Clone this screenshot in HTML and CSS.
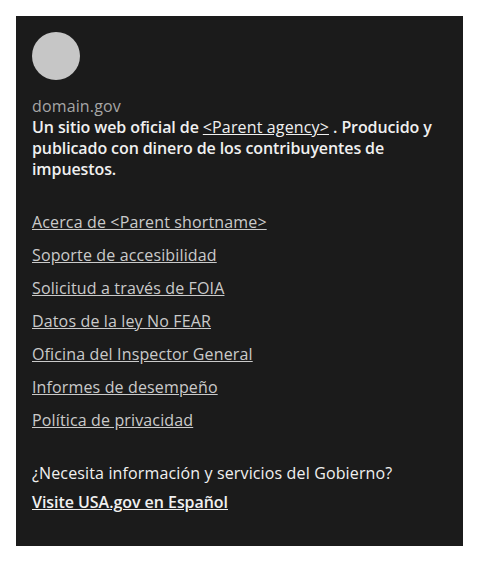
FILE: index.html
```html
<!DOCTYPE html>
<html lang="es">
<head>
<meta charset="utf-8">
<link rel="stylesheet" href="styles.css">
</head>
<body>
<footer class="identifier">
  <section class="masthead">
    <div class="logo"></div>
    <div class="identity">
      <p class="domain">domain.gov</p>
      <p class="disclaimer">Un sitio web oficial de <a href="#">&lt;Parent agency&gt;</a> . Producido y publicado con dinero de los contribuyentes de impuestos.</p>
    </div>
  </section>
  <nav class="links">
    <ul>
      <li><a href="#">Acerca de &lt;Parent shortname&gt;</a></li>
      <li><a href="#">Soporte de accesibilidad</a></li>
      <li><a href="#">Solicitud a través de FOIA</a></li>
      <li><a href="#">Datos de la ley No FEAR</a></li>
      <li><a href="#">Oficina del Inspector General</a></li>
      <li><a href="#">Informes de desempeño</a></li>
      <li><a href="#">Política de privacidad</a></li>
    </ul>
  </nav>
  <section class="usagov">
    <p class="question">¿Necesita información y servicios del Gobierno?</p>
    <a class="visit" href="#">Visite USA.gov en Español</a>
  </section>
</footer>
</body>
</html>
```
FILE: styles.css
```css
html, body {
  margin: 0;
  padding: 0;
  background: #ffffff;
}
body {
  padding: 16px;
  font-family: "Open Sans", "DejaVu Sans", sans-serif;
  font-size: 16px;
  letter-spacing: 0.14px;
}
p { margin: 0; }
.identifier {
  background: #1b1b1b;
  padding: 16px 16px 33px;
}
.logo {
  width: 48px;
  height: 48px;
  border-radius: 50%;
  background: #c6c6c6;
}
.identity {
  margin-top: 16px;
}
.domain {
  color: #a6a6a6;
  line-height: 21px;
}
.disclaimer {
  color: #f0f0f0;
  font-weight: 600;
  line-height: 21px;
  letter-spacing: -0.1px;
}
.disclaimer a {
  color: #f0f0f0;
  font-weight: 400;
  letter-spacing: 0.14px;
  text-decoration: underline;
}
.links ul {
  list-style: none;
  margin: 32px 0 0;
  padding: 0;
  display: flex;
  flex-direction: column;
  gap: 12px;
}
.links li {
  line-height: 21px;
}
.links a {
  color: #cacaca;
  text-decoration: underline;
}
.usagov {
  margin-top: 32px;
  display: flex;
  flex-direction: column;
  gap: 8px;
  line-height: 21px;
}
.question {
  color: #f0f0f0;
}
.visit {
  color: #f0f0f0;
  font-weight: 600;
  letter-spacing: -0.05px;
  text-decoration: underline;
  align-self: flex-start;
}
```
